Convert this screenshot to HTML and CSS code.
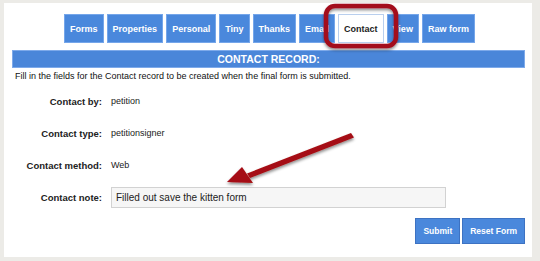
FILE: index.html
```html
<!DOCTYPE html>
<html lang="en">
<head>
  <meta charset="UTF-8" />
  <title>Contact record</title>
  <link rel="stylesheet" href="styles.css">
</head>
<body>
  <div class="panel">
    <div class="tabs">
      <a class="tab">Forms</a>
      <a class="tab">Properties</a>
      <a class="tab">Personal</a>
      <a class="tab">Tiny</a>
      <a class="tab">Thanks</a>
      <a class="tab">Email</a>
      <a class="tab active">Contact</a>
      <a class="tab">View</a>
      <a class="tab">Raw form</a>
    </div>

    <div class="section-title">CONTACT RECORD:</div>
    <p class="intro">Fill in the fields for the Contact record to be created when the final form is submitted.</p>

    <div class="fields">
      <label>Contact by:</label>
      <span class="value">petition</span>
      <label>Contact type:</label>
      <span class="value">petitionsigner</span>
      <label>Contact method:</label>
      <span class="value">Web</span>
      <label for="note">Contact note:</label>
      <span class="value"><input type="text" id="note" value="Filled out save the kitten form" /></span>
    </div>

    <div class="actions">
      <button>Submit</button>
      <button>Reset Form</button>
    </div>
  </div>

  <svg class="callout" width="540" height="261" viewBox="0 0 540 261">
    <defs>
      <filter id="shade" x="-20%" y="-20%" width="140%" height="140%">
        <feDropShadow dx="0" dy="2" stdDeviation="1.5" flood-color="#000" flood-opacity="0.45" />
      </filter>
    </defs>
    <rect x="326" y="6" width="70" height="40" rx="9" ry="9" fill="none" stroke="#a3111b" stroke-width="4.5" filter="url(#shade)" />
    <g filter="url(#shade)" fill="#a50d12">
      <path d="M351 133 L354 137.5 L250 178 L247 173.5 Z" />
      <path d="M227 182 L242 167 L253 183 Z" />
    </g>
  </svg>
</body>
</html>
```
FILE: styles.css
```css
* {
  margin: 0;
  padding: 0;
  box-sizing: border-box;
  font-family: 'Liberation Sans', Arial, sans-serif;
}

body {
  background: #ecebe7;
  padding: 3px 8px 4px 4px;
  width: 540px;
  height: 261px;
  overflow: hidden;
  position: relative;
}

.panel {
  background: #fff;
  height: 254px;
  padding: 11px 7px 0 8px;
}

.tabs {
  display: flex;
  justify-content: center;
  gap: 3px;
  padding-left: 2px;
}

.tab {
  display: flex;
  align-items: center;
  height: 29px;
  padding: 0 5px;
  background: #4a88dc;
  border: 1px solid #75a6ea;
  color: #fff;
  font-size: 9px;
  font-weight: bold;
}

.tab.active {
  background: #fff;
  border-color: #b9cfee;
  color: #222;
}

.section-title {
  margin-top: 7px;
  height: 18px;
  line-height: 16px;
  background: #4a86d9;
  border: 1px solid #7eaaea;
  color: #fff;
  font-size: 10.5px;
  font-weight: bold;
  text-align: center;
}

.intro {
  margin-top: 2px;
  padding-left: 3px;
  font-size: 9px;
  line-height: 12px;
  color: #111;
}

.fields {
  display: grid;
  grid-template-columns: 90px 1fr;
  grid-auto-rows: 32px;
  column-gap: 9px;
  align-items: center;
  margin-top: 3px;
}

.fields label {
  text-align: right;
  font-size: 9.5px;
  font-weight: bold;
  color: #222;
}

.value {
  font-size: 9px;
  color: #222;
}

.value input {
  width: 335px;
  height: 21px;
  padding: 0 4px;
  background: #f6f6f6;
  border: 1px solid #d2d2d2;
  font-size: 10px;
  color: #222;
}

.actions {
  display: flex;
  justify-content: flex-end;
  gap: 2px;
  margin-top: 5px;
}

.actions button {
  height: 26px;
  padding: 0 7px;
  background: #4a88dc;
  border: 1px solid #3d72c2;
  color: #fff;
  font-size: 8.5px;
  font-weight: bold;
}

.callout {
  position: absolute;
  left: 0;
  top: 0;
  pointer-events: none;
}
```
